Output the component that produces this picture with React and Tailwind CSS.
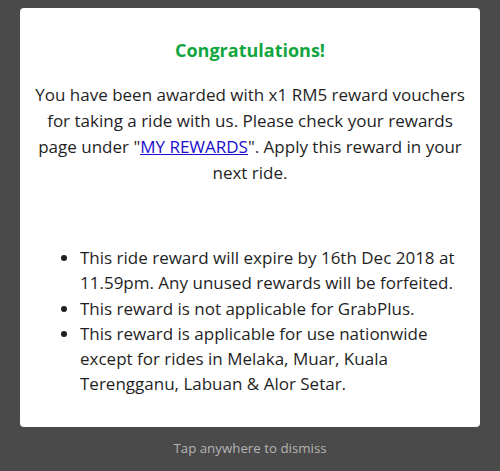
export default function App() {
    return (
        <div className="w-[500px] h-[471px] bg-[#4a4a4a] flex flex-col items-center font-['Open_Sans',sans-serif]">
            {/* Card */}
            <div className="mt-2 w-[460px] h-[419px] bg-white rounded-[4px] px-3 pt-[29px]">
                <h1 className="text-center text-[18px] leading-[26px] font-bold text-[#12a640]">Congratulations!</h1>
                <p className="mt-[19px] text-center text-[17px] leading-[26px] text-[#1f1f1f]">
                    You have been awarded with x1 RM5 reward vouchers for taking a ride with us. Please check your rewards
                    page under "<a href="#" className="text-[#1a0dcc] underline">MY REWARDS</a>". Apply this reward in
                    your next ride.
                </p>
                <ul className="mt-[59px] ml-[48px] list-disc text-[17px] leading-[25.3px] text-[#1f1f1f]">
                    <li>This ride reward will expire by 16th Dec 2018 at 11.59pm. Any unused rewards will be forfeited.</li>
                    <li>This reward is not applicable for GrabPlus.</li>
                    <li>This reward is applicable for use nationwide except for rides in Melaka, Muar, Kuala Terengganu, Labuan &amp; Alor Setar.</li>
                </ul>
            </div>
            <p className="mt-[12px] text-[13.3px] text-[#b4b4b4]">Tap anywhere to dismiss</p>
        </div>
    );
}
